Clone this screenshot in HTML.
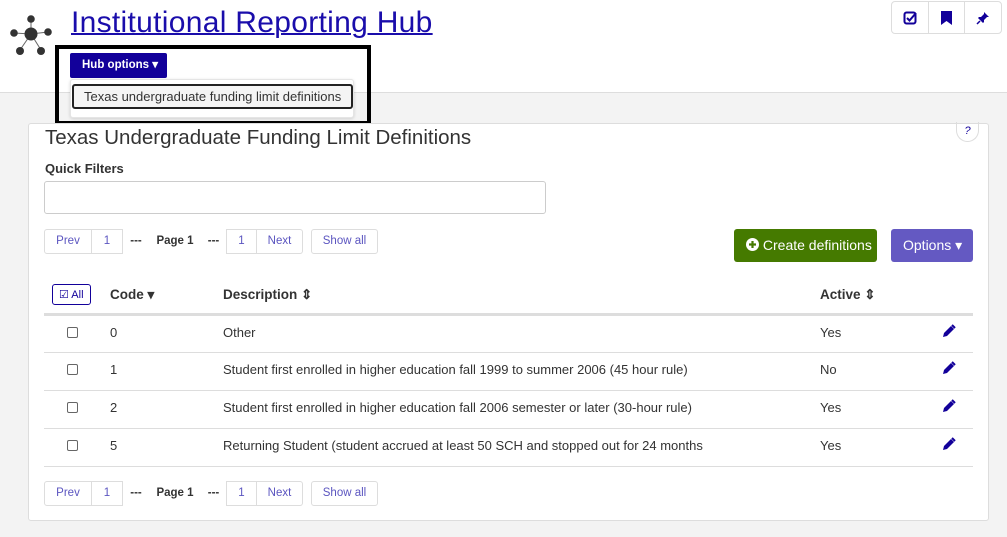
<!DOCTYPE html>
<html><head><style>
*{box-sizing:border-box;margin:0;padding:0}
body{width:1007px;height:537px;overflow:hidden;background:#f3f3f3;font-family:"Liberation Sans",Arial,sans-serif;font-size:13px;color:#333;position:relative}
.hdr{position:absolute;left:0;top:0;width:1007px;height:93px;background:#fff;border-bottom:1px solid #ddd}
.title{position:absolute;left:71px;top:6px;font-size:30px;color:#1a0dab;text-decoration:underline;text-decoration-thickness:2px;letter-spacing:0.3px;font-weight:300}
.blk{position:absolute;left:55px;top:45px;width:316px;height:80px;border:4px solid #000}
.hub{position:absolute;left:70px;top:53px;width:97px;height:25px;background:#12009a;color:#fff;font-weight:bold;font-size:11.5px;border-radius:2px;line-height:25px;padding-left:12px}
.dd{position:absolute;left:70px;top:79px;width:284px;height:39px;background:#fff;border:1px solid #e5e5e5;border-radius:3px;box-shadow:0 1px 3px rgba(0,0,0,.15)}
.dd div{position:absolute;left:1px;top:4px;width:281px;height:25px;border:2px solid #222;border-radius:3px;background:#f4f4f4;font-size:13px;line-height:21px;padding-left:10px;color:#333}
.tb{position:absolute;left:891px;top:1px;width:111px;height:33px;border:1px solid #ddd;border-radius:4px;background:#fff;display:flex}
.tb span{flex:1;border-right:1px solid #ddd;display:flex;align-items:center;justify-content:center}
.tb span:last-child{border-right:none}
.card{position:absolute;left:28px;top:123px;width:961px;height:398px;background:#fff;border:1px solid #ddd;border-radius:3px}
.h2{position:absolute;left:45px;top:126px;font-size:20.5px;color:#333;font-weight:300}
.help{position:absolute;left:956px;top:122px;width:23px;height:20px;border:1px solid #ddd;border-top:none;border-radius:0 0 12px 12px;font-size:11px;color:#12009a;text-align:center;font-style:italic;line-height:18px}
.qf{position:absolute;left:45px;top:161px;font-weight:bold;font-size:13px}
.inp{position:absolute;left:44px;top:181px;width:502px;height:33px;border:1px solid #ccc;border-radius:3px}
.pg{position:absolute;height:25px;display:flex;font-size:11.5px}
.pg span{border:1px solid #ddd;height:25px;line-height:23px;text-align:center;color:#5b55c0}
.pg i{font-style:normal;font-weight:bold;color:#333;line-height:25px;text-align:center}
.btn{position:absolute;height:33px;border-radius:3px;color:#fff;font-size:14px;line-height:33px}
table{position:absolute;left:44px;top:277px;width:929px;border-collapse:collapse}
th{text-align:left;font-size:13.5px;height:37px;border-bottom:3px solid #ddd;color:#333}
td{height:38px;border-bottom:1px solid #ddd;font-size:13px;color:#333;padding-bottom:3px}
.cb{display:inline-block;width:11px;height:11px;border:1px solid #666;border-radius:2px;margin-left:23px;margin-top:3px}
.pen{text-align:right;padding-right:17px}
</style></head><body>
<div class="hdr"></div>
<svg style="position:absolute;left:8px;top:14px" width="46" height="44" viewBox="0 0 46 44"><g stroke="#666" stroke-width="1"><line x1="23" y1="20" x2="23" y2="5"/><line x1="23" y1="20" x2="6" y2="19"/><line x1="23" y1="20" x2="40" y2="18"/><line x1="23" y1="20" x2="12" y2="36"/><line x1="23" y1="20" x2="33" y2="36"/></g><g fill="#333"><circle cx="23" cy="20" r="6.5"/><circle cx="23" cy="5" r="3.8"/><circle cx="6" cy="19" r="3.8"/><circle cx="40" cy="18" r="3.8"/><circle cx="12" cy="37" r="4"/><circle cx="33" cy="37" r="4"/></g></svg>
<div class="title">Institutional Reporting Hub</div>
<div class="blk"></div>
<div class="hub">Hub options ▾</div>
<div class="dd"><div>Texas undergraduate funding limit definitions</div></div>
<div class="tb"><span><svg width="14" height="14" viewBox="0 0 14 14"><rect x="1.5" y="1.5" width="11" height="11" rx="2" fill="none" stroke="#12009a" stroke-width="2"/><path d="M4 7l2.5 2.5L13 2" fill="none" stroke="#12009a" stroke-width="2"/></svg></span><span><svg width="11" height="14" viewBox="0 0 11 14"><path d="M0 0h11v14l-5.5-4L0 14z" fill="#12009a"/></svg></span><span><svg width="14" height="14" viewBox="0 0 14 14"><path d="M8 1l5 5-2 0-3 3 0 2-1 1-5-5 1-1 2 0 3-3z" fill="#12009a"/><path d="M4 10l-3 3" stroke="#12009a" stroke-width="1.5"/></svg></span></div>
<div class="card"></div>
<div class="h2">Texas Undergraduate Funding Limit Definitions</div>
<div class="help">?</div>
<div class="qf">Quick Filters</div>
<div class="inp"></div>
<div class="pg" style="left:44px;top:229px"><span style="width:48px;border-radius:3px 0 0 3px">Prev</span><span style="width:31px;border-left:none">1</span><i style="width:26px">---</i><i style="width:52px">Page 1</i><i style="width:25px">---</i><span style="width:31px">1</span><span style="width:46px;border-left:none;border-radius:0 3px 3px 0">Next</span><span style="width:67px;margin-left:8px;border-radius:3px">Show all</span></div>
<div class="pg" style="left:44px;top:481px"><span style="width:48px;border-radius:3px 0 0 3px">Prev</span><span style="width:31px;border-left:none">1</span><i style="width:26px">---</i><i style="width:52px">Page 1</i><i style="width:25px">---</i><span style="width:31px">1</span><span style="width:46px;border-left:none;border-radius:0 3px 3px 0">Next</span><span style="width:67px;margin-left:8px;border-radius:3px">Show all</span></div>
<div class="btn" style="left:734px;top:229px;width:143px;background:#457a00;padding-left:12px"><svg width="13" height="13" viewBox="0 0 13 13" style="vertical-align:-1px"><circle cx="6.5" cy="6.5" r="6.5" fill="#fff"/><path d="M6.5 3v7M3 6.5h7" stroke="#457a00" stroke-width="2.2"/></svg> Create definitions</div>
<div class="btn" style="left:891px;top:229px;width:82px;background:#6459c2;padding-left:12px">Options ▾</div>
<table>
<tr><th style="width:66px"><span style="display:inline-block;margin-left:8px;border:1px solid #12009a;border-radius:3px;font-size:11px;font-weight:normal;padding:3px 6px;color:#12009a">☑ All</span></th><th style="width:113px">Code ▾</th><th style="width:597px">Description ⇕</th><th>Active ⇕</th><th></th></tr>
<tr><td><span class="cb"></span></td><td>0</td><td>Other</td><td>Yes</td><td class="pen"><svg width="14" height="14" viewBox="0 0 14 14"><path d="M1 13l1-4 7-7 3 3-7 7z" fill="#12009a"/><path d="M10 1l3 3" stroke="#12009a" stroke-width="2"/></svg></td></tr>
<tr><td><span class="cb"></span></td><td>1</td><td>Student first enrolled in higher education fall 1999 to summer 2006 (45 hour rule)</td><td>No</td><td class="pen"><svg width="14" height="14" viewBox="0 0 14 14"><path d="M1 13l1-4 7-7 3 3-7 7z" fill="#12009a"/><path d="M10 1l3 3" stroke="#12009a" stroke-width="2"/></svg></td></tr>
<tr><td><span class="cb"></span></td><td>2</td><td>Student first enrolled in higher education fall 2006 semester or later (30-hour rule)</td><td>Yes</td><td class="pen"><svg width="14" height="14" viewBox="0 0 14 14"><path d="M1 13l1-4 7-7 3 3-7 7z" fill="#12009a"/><path d="M10 1l3 3" stroke="#12009a" stroke-width="2"/></svg></td></tr>
<tr><td><span class="cb"></span></td><td>5</td><td>Returning Student (student accrued at least 50 SCH and stopped out for 24 months</td><td>Yes</td><td class="pen"><svg width="14" height="14" viewBox="0 0 14 14"><path d="M1 13l1-4 7-7 3 3-7 7z" fill="#12009a"/><path d="M10 1l3 3" stroke="#12009a" stroke-width="2"/></svg></td></tr>
</table>
</body></html>
